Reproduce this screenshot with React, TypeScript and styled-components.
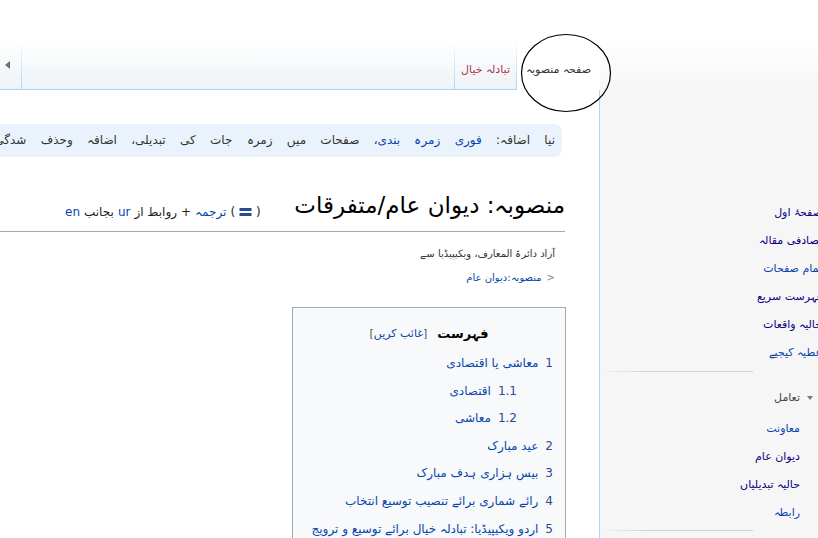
import React from "react";
import styled, { createGlobalStyle } from "styled-components";

const Global = createGlobalStyle`
  html, body { margin: 0; padding: 0; }
  body {
    width: 818px;
    height: 538px;
    overflow: hidden;
    background: #f6f6f6 linear-gradient(#ffffff 40px, #f6f6f6 92px) no-repeat;
    font-family: "DejaVu Sans", "Noto Sans", sans-serif;
  }
`;

const Page = styled.div`
  position: relative;
  display: grid;
  grid-template-columns: 600px 218px;
  width: 818px;
  height: 538px;
  overflow: hidden;
`;

const MainCol = styled.div`
  display: flex;
  flex-direction: column;
  min-width: 0;
  height: 538px;
`;

const tabGradient =
  "linear-gradient(to top, #a7d7f9 0, #a7d7f9 1px, #eef3f7 1px, #ffffff 100%)";

const TabBar = styled.nav`
  height: 90px;
  box-sizing: border-box;
  padding-top: 40px;
  display: flex;
  direction: rtl;
  align-items: stretch;
`;

const Tab = styled.div<{ $selected?: boolean; $width: number }>`
  width: ${(p) => p.$width}px;
  box-sizing: border-box;
  display: flex;
  justify-content: center;
  align-items: flex-start;
  padding-top: 22px;
  font-size: 11px;
  line-height: 16px;
  white-space: nowrap;
  background: ${(p) => (p.$selected ? "#ffffff" : tabGradient)};
  color: ${(p) => (p.$selected ? "#333333" : "#b3344c")};
`;

const TabSep = styled.div`
  width: 1px;
  background: linear-gradient(to bottom, rgba(167, 215, 249, 0) 0, #a7d7f9 100%);
`;

const TabFill = styled.div`
  flex: 1;
  background: ${tabGradient};
`;

const ArrowTab = styled.div`
  width: 21px;
  display: flex;
  align-items: flex-start;
  justify-content: center;
  padding-top: 21px;
  box-sizing: border-box;
  background: ${tabGradient};
`;

const LeftArrow = styled.span`
  width: 0;
  height: 0;
  border-top: 4px solid transparent;
  border-bottom: 4px solid transparent;
  border-right: 5px solid #6f6f6f;
  margin-right: 6px;
`;

const Content = styled.main`
  flex: 1;
  background: #ffffff;
  border-right: 1px solid #a7d7f9;
  overflow: hidden;
  direction: rtl;
  padding: 34px 34px 0 0;
`;

const ContentInner = styled.div`
  margin-left: -20px;
`;

const Notice = styled.div`
  height: 33px;
  margin-right: 3px;
  border-radius: 8px;
  background: #eaf3fb;
  font-size: 12px;
  word-spacing: 10.5px;
  line-height: 33px;
  padding-right: 7px;
  color: #333333;
  white-space: nowrap;
  overflow: hidden;
`;

const Link = styled.span<{ $visited?: boolean }>`
  color: ${(p) => (p.$visited ? "#0b0080" : "#0645ad")};
`;

const HeadingRow = styled.div`
  margin-top: 28px;
  display: flex;
  justify-content: space-between;
  align-items: flex-end;
  border-bottom: 1px solid #a2a9b1;
  padding-bottom: 6px;
`;

const Title = styled.h1`
  margin: 0;
  font-size: 23px;
  font-weight: normal;
  line-height: 40px;
  color: #000000;
  white-space: nowrap;
`;

const Tools = styled.div`
  margin-left: 85px;
  margin-bottom: 6px;
  font-size: 12px;
  color: #222222;
  white-space: nowrap;
  display: flex;
  align-items: center;
  gap: 4px;
`;

const Sup = styled.sup`
  font-size: 12px;
  line-height: 0;
`;

const SubLine = styled.div<{ $top: number }>`
  margin-top: ${(p) => p.$top}px;
  margin-right: 10px;
  font-size: 10px;
  line-height: 16px;
  color: #333333;
  white-space: nowrap;
`;

const Crumb = styled.span`
  color: #888888;
  margin-left: 5px;
`;

const Toc = styled.div`
  margin-top: 21px;
  margin-right: -1px;
  width: 274px;
  box-sizing: border-box;
  border: 1px solid #a2a9b1;
  background: #f8f9fa;
  padding: 18px 12px 0 0;
  height: 400px;
`;

const TocTitle = styled.div`
  display: flex;
  justify-content: center;
  align-items: center;
  gap: 10px;
  line-height: 16px;
  padding-left: 12px;
`;

const TocHeading = styled.span`
  font-size: 13px;
  font-weight: bold;
  color: #000000;
`;

const TocToggle = styled.span`
  font-size: 11px;
  color: #555555;
`;

const TocList = styled.ul`
  list-style: none;
  margin: 8px 0 0 0;
  padding: 0;
`;

const TocItem = styled.li<{ $level: number }>`
  padding-right: ${(p) => (p.$level - 1) * 36}px;
  font-size: 12px;
  line-height: 27.6px;
  white-space: nowrap;
  color: #0645ad;
`;

const TocNum = styled.span`
  margin-left: 7px;
  color: #2a4b8d;
`;

const Sidebar = styled.aside`
  direction: rtl;
  overflow: hidden;
  padding-top: 199px;
  display: flex;
  flex-direction: column;
  align-items: flex-start;
`;

const PortalList = styled.ul<{ $inset: number }>`
  list-style: none;
  margin: 0;
  padding: 0;
  margin-right: ${(p) => p.$inset}px;
`;

const PortalItem = styled.li`
  font-size: 11px;
  line-height: 28px;
  white-space: nowrap;
`;

const Separator = styled.div<{ $gap: number }>`
  margin-top: ${(p) => p.$gap}px;
  width: 153px;
  height: 1px;
  align-self: flex-end;
  background: linear-gradient(to left, #d0d3d6 0, #d0d3d6 70%, rgba(208, 211, 214, 0) 100%);
`;

const PortalHeading = styled.div`
  margin-top: 16px;
  margin-right: 5px;
  display: flex;
  align-items: center;
  gap: 7px;
  font-size: 11px;
  line-height: 20px;
  color: #444444;
  margin-bottom: 7px;
`;

const DownArrow = styled.span`
  width: 0;
  height: 0;
  border-left: 3px solid transparent;
  border-right: 3px solid transparent;
  border-top: 4px solid #777777;
`;

const Annotation = styled.svg`
  position: absolute;
  left: 520px;
  top: 32px;
  pointer-events: none;
`;

const EqualsIcon = () => (
  <svg width="13" height="10" viewBox="0 0 13 10">
    <rect x="0.5" y="1" width="12" height="3" fill="#2a4b8d" />
    <rect x="0.5" y="6" width="12" height="3" fill="#2a4b8d" />
  </svg>
);

const navLinks: { text: string; visited?: boolean }[] = [
  { text: "صفحۂ اول", visited: true },
  { text: "تصادفی مقالہ", visited: true },
  { text: "تمام صفحات" },
  { text: "فہرست سریع", visited: true },
  { text: "حالیہ واقعات", visited: true },
  { text: "عطیہ کیجیے" },
];

const interactLinks: { text: string; visited?: boolean }[] = [
  { text: "معاونت" },
  { text: "دیوان عام", visited: true },
  { text: "حالیہ تبدیلیاں", visited: true },
  { text: "رابطہ" },
];

const tocItems = [
  { num: "1", text: "معاشی یا اقتصادی", level: 1 },
  { num: "1.1", text: "اقتصادی", level: 2 },
  { num: "1.2", text: "معاشی", level: 2 },
  { num: "2", text: "عید مبارک", level: 1 },
  { num: "3", text: "بیس ہزاری ہدف مبارک", level: 1 },
  { num: "4", text: "رائے شماری برائے تنصیب توسیع انتخاب", level: 1 },
  { num: "5", text: "اردو ویکیپیڈیا: تبادلہ خیال برائے توسیع و ترویج", level: 1 },
];

export default function App() {
  return (
    <>
      <Global />
      <Page>
        <MainCol>
          <TabBar>
            <Tab $selected $width={83}>صفحہ منصوبہ</Tab>
            <TabSep />
            <Tab $width={61}>تبادلہ خیال</Tab>
            <TabSep />
            <TabFill />
            <TabSep />
            <ArrowTab>
              <LeftArrow />
            </ArrowTab>
          </TabBar>
          <Content>
            <ContentInner>
              <Notice>
                نیا اضافہ: <Link>فوری زمرہ بندی</Link>، صفحات میں زمرہ جات کی تبدیلی، اضافہ وحذف شدگی
              </Notice>
              <HeadingRow>
                <Title>منصوبہ: دیوان عام/متفرقات</Title>
                <Tools>
                  <span>(</span>
                  <EqualsIcon />
                  <span>)</span>
                  <Link>ترجمہ</Link>
                  <Sup>+</Sup>
                  <span>روابط از</span>
                  <Link>ur</Link>
                  <span>بجانب</span>
                  <Link>en</Link>
                </Tools>
              </HeadingRow>
              <SubLine $top={14}>آزاد دائرۃ المعارف، ویکیپیڈیا سے</SubLine>
              <SubLine $top={8}>
                <Crumb>&lt;</Crumb>
                <Link>منصوبہ:دیوان عام</Link>
              </SubLine>
              <Toc>
                <TocTitle>
                  <TocHeading>فہرست</TocHeading>
                  <TocToggle>
                    [<Link>غائب کریں</Link>]
                  </TocToggle>
                </TocTitle>
                <TocList>
                  {tocItems.map((it) => (
                    <TocItem key={it.num} $level={it.level}>
                      <TocNum>{it.num}</TocNum>
                      {it.text}
                    </TocItem>
                  ))}
                </TocList>
              </Toc>
            </ContentInner>
          </Content>
        </MainCol>
        <Sidebar>
          <PortalList $inset={-4}>
            {navLinks.map((l) => (
              <PortalItem key={l.text}>
                <Link $visited={l.visited}>{l.text}</Link>
              </PortalItem>
            ))}
          </PortalList>
          <Separator $gap={4} />
          <PortalHeading>
            <DownArrow />
            <span>تعامل</span>
          </PortalHeading>
          <PortalList $inset={18}>
            {interactLinks.map((l) => (
              <PortalItem key={l.text}>
                <Link $visited={l.visited}>{l.text}</Link>
              </PortalItem>
            ))}
          </PortalList>
          <Separator $gap={3} />
        </Sidebar>
        <Annotation width="92" height="82" viewBox="0 0 92 82">
          <ellipse cx="46" cy="41" rx="44.5" ry="38.5" fill="none" stroke="#000" strokeWidth="1.2" />
        </Annotation>
      </Page>
    </>
  );
}
